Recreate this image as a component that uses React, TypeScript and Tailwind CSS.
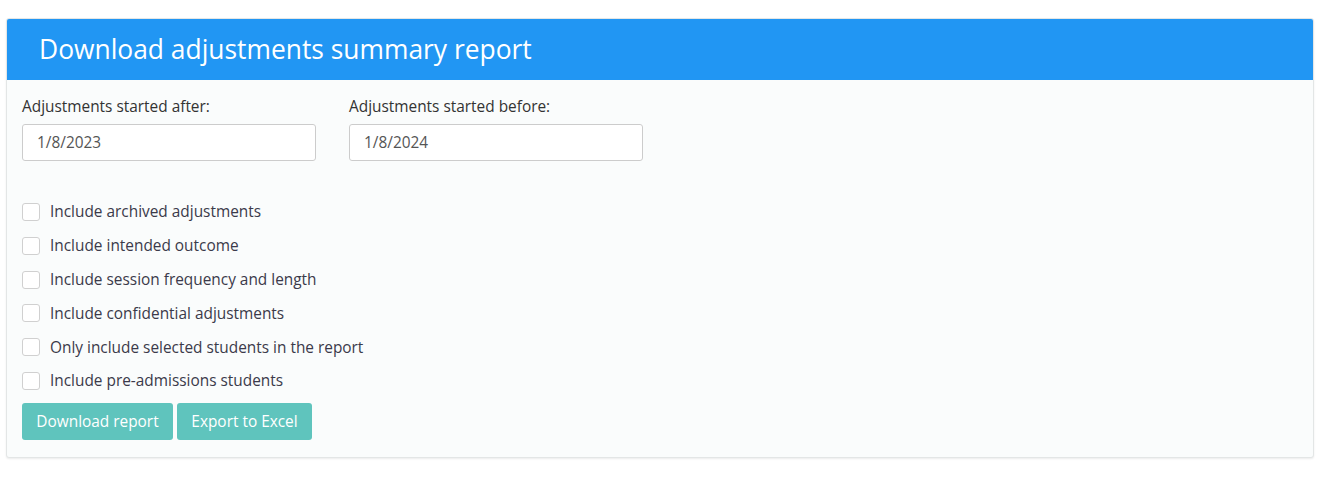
const options = [
  "Include archived adjustments",
  "Include intended outcome",
  "Include session frequency and length",
  "Include confidential adjustments",
  "Only include selected students in the report",
  "Include pre-admissions students",
];

export default function App() {
  return (
    <div className="min-h-[488px] bg-white pt-[18px] px-[6px] font-['Open_Sans',sans-serif] text-[#333]">
      <div className="w-[1308px] rounded-[3px] border border-[#e3e6e6] bg-[#fafcfc] shadow-[0_1px_2px_rgba(0,0,0,0.08)] overflow-hidden">
        <div className="h-[61px] bg-[#2196f3] flex items-center pl-[32px]">
          <h1 className="text-[26.4px] text-white leading-none">Download adjustments summary report</h1>
        </div>
        <div className="px-[15px] pt-[17px] pb-[17px]">
          <div className="flex gap-[33px]">
            <DateField label="Adjustments started after:" value="1/8/2023" />
            <DateField label="Adjustments started before:" value="1/8/2024" />
          </div>
          <div className="mt-[42px] flex flex-col gap-[15.8px]">
            {options.map((o) => (
              <label key={o} className="flex items-center h-[18px]">
                <span className="w-[18px] h-[18px] rounded-[3px] border border-[#d0d0d0] bg-white" />
                <span className="ml-[10px] text-[15.4px] text-[#3b3a4a]">{o}</span>
              </label>
            ))}
          </div>
          <div className="mt-[13px] flex gap-[4px]">
            <button className="h-[37px] w-[151px] rounded-[3px] bg-[#5fc4bd] text-white text-[15.4px]">Download report</button>
            <button className="h-[37px] w-[135px] rounded-[3px] bg-[#5fc4bd] text-white text-[15.4px]">Export to Excel</button>
          </div>
        </div>
      </div>
    </div>
  );
}

function DateField({ label, value }: { label: string; value: string }) {
  return (
    <div className="w-[294px]">
      <div className="text-[15.4px] leading-[20px] text-[#333]">{label}</div>
      <div className="mt-[7px] h-[37px] rounded-[3px] border border-[#ccc] bg-white flex items-center pl-[14px] text-[15.4px] text-[#555]">
        {value}
      </div>
    </div>
  );
}
